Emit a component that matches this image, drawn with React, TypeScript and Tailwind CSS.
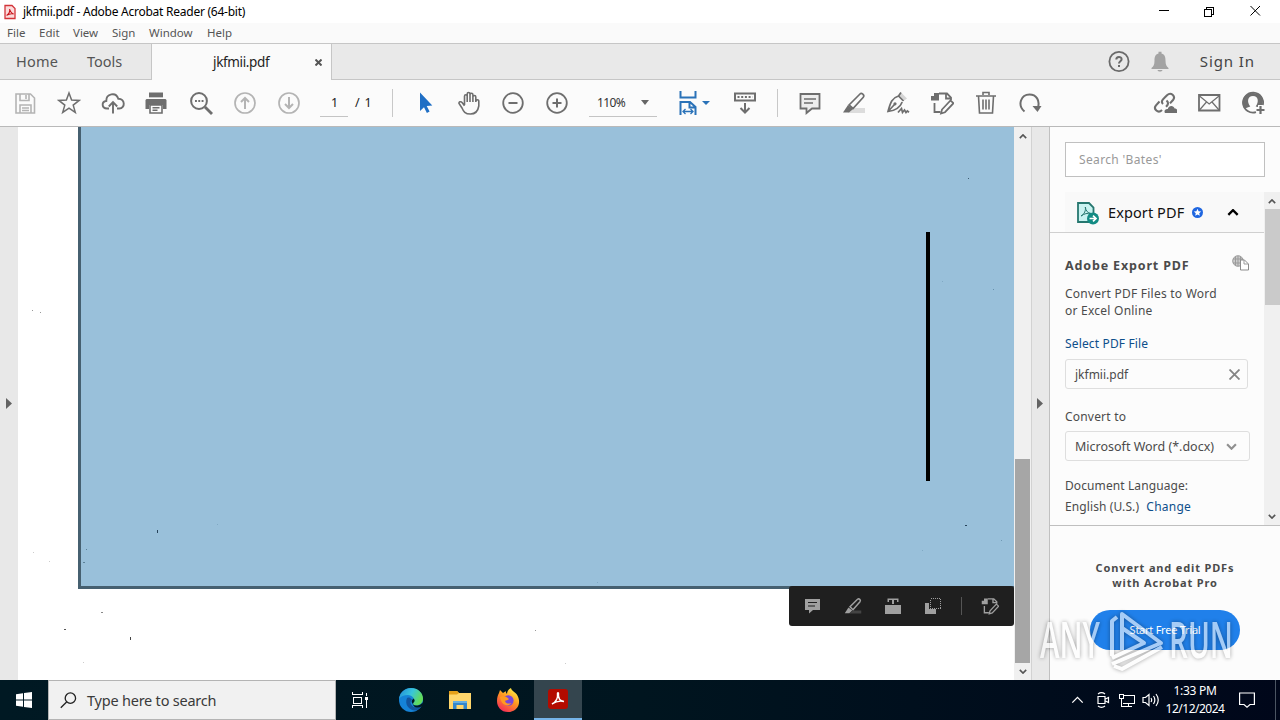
import type { ReactNode } from "react";
import clsx from "clsx";

function Icon({ children, className = "h-6 w-6 text-[#6e6e6e]", box = "0 0 24 24" }: {
  children: ReactNode;
  className?: string;
  box?: string;
}) {
  return (
    <svg
      viewBox={box}
      className={clsx("shrink-0", className)}
      fill="none"
      stroke="currentColor"
      strokeWidth="2"
    >
      {children}
    </svg>
  );
}

function Slot({ children }: { children: ReactNode }) {
  return <div className="flex w-11 shrink-0 items-center justify-center">{children}</div>;
}

function TitleBar() {
  return (
    <header className="flex h-[23px] items-center bg-white">
      <svg viewBox="0 0 12 16" className="ml-1 h-4 w-3 shrink-0" fill="none">
        <path d="M1 1.500h7l3 3v10H1z" fill="#fbdcdc" stroke="#d3343a" strokeWidth="1.300" />
        <path d="M2.600 11.400C5 10 6 7.500 5.700 5c.7 3 2 4.500 4 5-2.600-.6-4.500-.2-7.100 1.400z" stroke="#c8151c" strokeWidth="1.100" />
      </svg>
      <span className="ml-[7px] text-[12px] tracking-[-0.25px] text-black">
        jkfmii.pdf - Adobe Acrobat Reader (64-bit)
      </span>
      <svg viewBox="0 0 110 14" className="mr-[17px] ml-auto h-[14px] w-[110px]" fill="none" stroke="#000" shapeRendering="crispEdges">
        <path d="M6 5.500h10" />
        <path d="M51.500 4.500h7v7h-7zM53.500 4V2.500h7v7H59" />
        <path d="M97.500 1l9.500 9.500M107 1l-9.500 9.500" shapeRendering="auto" />
      </svg>
    </header>
  );
}

const MENUS = [
  { label: "File", width: "w-8" },
  { label: "Edit", width: "w-[34px]" },
  { label: "View", width: "w-[39px]" },
  { label: "Sign", width: "w-[37px]" },
  { label: "Window", width: "w-[58px]" },
  { label: "Help", width: "w-10" },
];

function MenuBar() {
  return (
    <nav className="flex h-5 items-center bg-[#fafafa] pl-[7px] text-[11.5px] text-[#555]">
      {MENUS.map((m) => (
        <span key={m.label} className={m.width}>{m.label}</span>
      ))}
    </nav>
  );
}

function TabBar() {
  return (
    <div className="flex h-[37px] border-y border-[#c6c6c6] bg-[#e9e9e9] text-[14.5px] text-[#555]">
      <div className="flex w-[151px] items-center pl-4">
        <span className="w-[71px] tracking-[0.2px]">Home</span>
        <span>Tools</span>
      </div>
      <div className="-mb-px flex w-[181px] items-center border-x border-[#c6c6c6] bg-[#fafafa]">
        <span className="ml-[61px] text-[13.5px] tracking-[-0.35px] text-[#222]">jkfmii.pdf</span>
        <Icon className="mr-[9px] ml-auto h-[7px] w-[7px] text-[#555]" box="0 0 7 7">
          <path d="M.5.500l6 6M6.500.500l-6 6" />
        </Icon>
      </div>
      <div className="ml-auto flex items-center">
        <Icon className="h-[22px] w-[22px] text-[#6a6a6a]" box="0 0 22 22">
          <circle cx="11" cy="10.500" r="9.600" strokeWidth="1.800" />
          <path d="M8.300 8.500C8.300 5.200 13.600 5.200 13.600 8.300c0 2-2.600 2-2.600 4.200M11 13.900v2" />
        </Icon>
        <svg viewBox="0 0 18 22" className="ml-[21px] h-[22px] w-[18px]" fill="#a3a3a3">
          <path d="M7.500 2.500V.700h3v1.800C14 3.500 14.500 6.500 14.500 9.500c0 4 1 6 3 7.500v1H.5v-1c2-1.500 3-3.500 3-7.500 0-3 .5-6 4-7zM6.500 19h5c-.5 2-4.500 2-5 0z" />
        </svg>
        <span className="mr-[25px] ml-[31px] text-[15px] tracking-[0.9px] text-[#444]">Sign In</span>
      </div>
    </div>
  );
}

function EditPdfGlyph() {
  return (
    <>
      <path d="M9 2.500h8l4 4V9M16 3v4.500h5M4.500 12v9h6" strokeWidth="1.800" />
      <path d="M1 5h3V2h5v7.500H1z" fill="currentColor" stroke="none" />
      <path d="M12 18.500L20.500 9.500l3 2.700-8.500 9-4 1.300z" strokeWidth="1.700" />
    </>
  );
}

function Toolbar() {
  return (
    <div className="flex h-[47px] border-b border-[#b9b9b9] bg-[#fbfbfb] pl-[3px] text-[#6e6e6e]">
      <Slot>
        <Icon className="h-6 w-6 text-[#b4b4b4]">
          <path d="M3 3h14.500l4 4v15H3zM7 3v6.500h9V3M13 4v4M7 22v-8h11v8M9 17h7M9 19.500h7" strokeWidth="1.600" />
        </Icon>
      </Slot>
      <Slot>
        <Icon>
          <path d="M12 2l2.600 7.100 7.600.3-6 4.700 2.100 7.300L12 17.200l-6.300 4.200 2.100-7.300-6-4.700 7.600-.3z" strokeWidth="1.500" />
        </Icon>
      </Slot>
      <Slot>
        <Icon>
          <path d="M8 17.500H6C.5 17.500.2 10.500 5.300 10 5 2.500 15 .5 17.300 7.700c7-.2 7.200 9.800 1 9.800H16" strokeWidth="1.900" />
          <path d="M12 22.500V11.500M7.800 15.500L12 11.200l4.200 4.300" strokeWidth="1.900" />
        </Icon>
      </Slot>
      <Slot>
        <Icon className="-ml-[2px] h-6 w-6 text-[#6e6e6e]">
          <path d="M5 1.500h14v5H5zM2.500 8h19l1 1v9H19v-4H5v4H1.500V9z" fill="currentColor" stroke="none" />
          <path d="M6 14h12v8H6zM8.500 16.700h7M8.500 19.300h5" strokeWidth="1.600" />
          <path d="M4 7.200h16" stroke="#fbfbfb" strokeWidth="1" />
        </Icon>
      </Slot>
      <Slot>
        <Icon>
          <circle cx="10" cy="10" r="7.900" />
          <path d="M16 16l7 7" strokeWidth="2.800" />
          <path d="M6 10h8.500" strokeDasharray="1.900 1.400" />
        </Icon>
      </Slot>
      <Slot>
        <Icon className="h-6 w-6 text-[#b4b4b4]">
          <circle cx="12" cy="12" r="10" strokeWidth="1.700" />
          <path d="M12 18V7M8 11l4-4 4 4" />
        </Icon>
      </Slot>
      <Slot>
        <Icon className="h-6 w-6 text-[#b4b4b4]">
          <circle cx="12" cy="12" r="10" strokeWidth="1.700" />
          <path d="M12 6v11M8 13l4 4 4-4" />
        </Icon>
      </Slot>
      <div className="flex w-[81px] items-center pl-[9px] text-[12.5px] text-[#222]">
        <span className="flex h-7 w-7 items-center justify-center border-b border-[#c4c4c4] pt-px pl-px">1</span>
        <span className="ml-[7px] tracking-[0.8px]">/ 1</span>
      </div>
      <div className="mt-[9px] mr-[10px] h-7 w-px bg-[#c8c8c8]" />
      <Slot>
        <svg viewBox="0 0 24 24" className="h-6 w-6" fill="#1f6fc5">
          <path d="M7 1.500v18.500l4-3.800 2.900 5.800 2.700-1.400-2.900-5.600 5.600-.5z" />
        </svg>
      </Slot>
      <Slot>
        <Icon>
          <path
            d="M7.500 14V5.300c0-2 2.700-2 2.700 0V11M10.200 10V3c0-2 2.800-2 2.800 0v8M13 10V3.800c0-2 2.900-2 2.900 0V11M15.900 10V6c0-2 2.900-2 2.900 0v5c0-3 3-3 3-.5V15C21 20 18.500 23 13.500 23c-5.500 0-7-2.500-8.500-6l-3-4.500c-.4-2 2-2.300 3.300-.8l2.200 3"
            strokeWidth="1.600"
          />
        </Icon>
      </Slot>
      <Slot>
        <Icon>
          <circle cx="12" cy="12" r="9.800" strokeWidth="1.800" />
          <path d="M7.500 12h9" />
        </Icon>
      </Slot>
      <Slot>
        <Icon>
          <circle cx="12" cy="12" r="9.800" strokeWidth="1.800" />
          <path d="M7.500 12h9M12 7.500v9" />
        </Icon>
      </Slot>
      <div className="flex w-[88px] items-center pl-[10px]">
        <span className="flex h-7 w-[68px] items-center border-b border-[#c4c4c4] pl-2 text-[12px] tracking-[-0.6px] text-[#333]">
          110%
          <svg viewBox="0 0 8 5" className="mr-2 ml-auto h-[5px] w-2" fill="#666">
            <path d="M0 0h8L4 5z" />
          </svg>
        </span>
      </div>
      <div className="flex w-14 items-center pl-[10px]">
        <Icon className="h-6 w-[22px] text-[#2a72b8]" box="1 0 22 24">
          <path d="M4.500 0v6.500h15V0M4.500 24V11H14l5.500 5v8M13.500 11v5.500h6" />
          <path d="M7.500 20.500h9M9.500 18L7 20.500 9.500 23M14.500 18l2.500 2.500-2.500 2.500" strokeWidth="1.300" />
        </Icon>
        <svg viewBox="0 0 8 4" className="ml-[3px] h-1 w-2" fill="#2a72b8">
          <path d="M0 0h8L4 4z" />
        </svg>
      </div>
      <Slot>
        <Icon>
          <path d="M2 2.500h20v7H2zM12 12v9M7.500 17l4.500 4.500 4.500-4.500" />
          <path d="M4.500 6h15" strokeDasharray="2 1.700" />
        </Icon>
      </Slot>
      <div className="mt-[9px] mr-[10px] ml-[10px] h-7 w-px bg-[#c8c8c8]" />
      <Slot>
        <Icon>
          <path d="M2.500 3h19v14.500H14L8.500 22v-4.500h-6z" fill="#ededed" strokeWidth="1.800" />
          <path d="M6 8h12M6 12h9" strokeWidth="1.500" />
        </Icon>
      </Slot>
      <Slot>
        <Icon>
          <path d="M9 17h14v5H6z" fill="#dcdcdc" stroke="none" />
          <path d="M7 14L18 3c1.500-1.500 5 1 3.300 3.300L11 17.500z" strokeWidth="1.700" />
          <path d="M6 14l5 4-4 3.500H1z" fill="currentColor" stroke="none" />
        </Icon>
      </Slot>
      <Slot>
        <Icon>
          <path d="M12.500 5L15 1.500l6 6L17.500 10z" fill="#d5d5d5" stroke="none" />
          <path d="M15 1.500L12.500 5C6 7 4.500 11 2 20.500c8-1 12-3.500 14.200-9.500M12.500 5l5 5M2 20.500l6.500-7" strokeWidth="1.700" />
          <circle cx="9" cy="12.800" r="1.600" fill="currentColor" stroke="none" />
          <path d="M12 21.500l3.500-4 1 4 2-2.500 1.500 2.500 1.300-1.500 1.700 1.300" strokeWidth="1.700" />
        </Icon>
      </Slot>
      <Slot>
        <Icon><EditPdfGlyph /></Icon>
      </Slot>
      <Slot>
        <Icon>
          <path d="M2 5h20M9 4V1.500h6V4M4.500 5l1 17h13l1-17M9 8.500v10M12 8.500v10M15 8.500v10" strokeWidth="1.600" />
        </Icon>
      </Slot>
      <Slot>
        <Icon>
          <path d="M6.500 20.500C-1 14 3 3.500 11.500 3.500c7 0 10.500 6 8.500 13" />
          <path d="M14.500 15h9l-4 6z" fill="currentColor" stroke="none" />
        </Icon>
      </Slot>
      <div className="ml-auto flex pr-[5px]">
        <Slot>
          <Icon>
            <path d="M10 13c-2-2-1-4 1-5.800l3-3c4-3.700 9 1 6 4.800l-3 3.400M13.500 9.500c2.500 2 1.500 4.500-.5 6.300M9 19c-4 4-9-1-6-4.600l3.500-3.900" strokeWidth="2.100" />
            <path d="M12 22c-1.500-2 .5-4.500 2.800-4 .8-4 6-4 6.800-.5 3 0 3.500 3 2.400 4.500z" fill="currentColor" stroke="none" />
          </Icon>
        </Slot>
        <Slot>
          <Icon>
            <path d="M2 4h20.500v15.500H2z" strokeWidth="1.800" />
            <path d="M2.500 5l9.700 8L22 5M2.500 19l7-8M22 19l-7-8" strokeWidth="1.200" />
          </Icon>
        </Slot>
        <Slot>
          <Icon>
            <path d="M15 21.200A10 10 0 1 1 21.800 14" strokeWidth="1.800" />
            <path d="M12 2C0 2 0 14 4 18c1.500-1.800 3.500-1.700 5.300-2.600-3.500-4-3-10.400 2.700-10.400s6 6.400 2.700 10.400L17 16v-2h4C24 5 18 2 12 2z" fill="currentColor" stroke="none" />
            <path d="M19.500 15v8M15.500 19h8" strokeWidth="2.200" />
          </Icon>
        </Slot>
      </div>
    </div>
  );
}

// dust left on the scanned page
const SPECKS = [
  "left-[14px] top-[183px] bg-[#999]",
  "left-[22px] top-[185px] bg-[#999]",
  "left-[139px] top-[403px] h-[3px] bg-[#26435a]",
  "left-[68px] top-[422px] bg-[#5b8198]",
  "left-[65px] top-[435px] w-[2px] bg-[#5b8198]",
  "left-[83px] top-[485px] w-[2px] bg-[#888]",
  "left-[46px] top-[502px] w-[2px] bg-[#555]",
  "left-[112px] top-[510px] h-[3px] bg-[#444]",
  "left-[65px] top-[535px] bg-[#ccc]",
  "left-[15px] top-[425px] bg-[#ccc]",
  "left-[31px] top-[434px] bg-[#ccc]",
  "left-[517px] top-[503px] bg-[#999]",
  "left-[547px] top-[536px] bg-[#ccc]",
  "left-[950px] top-[51px] bg-[#3b5a70]",
  "left-[975px] top-[162px] bg-[#6590ab]",
  "left-[924px] top-[154px] bg-[#80a9c4]",
  "left-[947px] top-[398px] w-[2px] bg-[#26435a]",
  "left-[983px] top-[413px] bg-[#7099b4]",
  "left-[904px] top-[423px] bg-[#80a9c4]",
  "left-[199px] top-[397px] bg-[#80a9c4]",
  "left-[579px] top-[455px] bg-[#80a9c4]",
];

function FloatingTools() {
  return (
    <div className="absolute right-0 bottom-[54px] flex h-10 w-[225px] items-center rounded-[3px] bg-[#1f1f1f] pl-1 text-[#a0a0a0]">
      <div className="flex w-10 justify-center">
        <svg viewBox="0 0 18 18" className="h-[18px] w-[18px]" fill="currentColor">
          <path d="M1 2h15v11H9l-4 3.500V13H1z" />
          <path d="M4 5.500h9M4 9h7" stroke="#1f1f1f" strokeWidth="1.200" />
        </svg>
      </div>
      <div className="flex w-10 justify-center">
        <Icon className="h-[18px] w-[18px]">
          <path d="M12 18h11v4H7z" fill="#444" stroke="none" />
          <path d="M8 13L18 3c2-1.500 5 1 3.300 3.300L12 17z" />
          <path d="M6 14l5 4-4 3.500H1z" fill="currentColor" stroke="none" />
        </Icon>
      </div>
      <div className="flex w-10 justify-center">
        <svg viewBox="0 0 18 18" className="h-[18px] w-[18px]" fill="currentColor">
          <path d="M1 8h16v9H1zM3.500 1.500h11V5H13V3h-3v4H8V3H5v2H3.500z" />
        </svg>
      </div>
      <div className="flex w-10 justify-center">
        <svg viewBox="0 0 18 18" className="h-[18px] w-[18px]">
          <path d="M1 6h4v6h7v5H1z" fill="currentColor" />
          <path d="M6.500 1.500h10v10h-10z" fill="none" stroke="currentColor" strokeDasharray="1 1" shapeRendering="crispEdges" />
        </svg>
      </div>
      <div className="ml-2 h-[18px] w-px bg-[#555]" />
      <div className="ml-2 flex w-10 justify-center">
        <Icon className="h-[18px] w-[18px]"><EditPdfGlyph /></Icon>
      </div>
    </div>
  );
}

function DocumentView() {
  return (
    <main className="relative w-[996px] overflow-hidden bg-white pl-[60px]">
      <div className="h-[462px] border-b-[3px] border-l-[3px] border-[#466070] bg-[#99c0da] pt-[105px] pl-[845px]">
        <div className="h-[249px] w-1 bg-black" />
      </div>
      {SPECKS.map((s) => (
        <i key={s} className={clsx("absolute min-h-px min-w-px", s)} />
      ))}
      <FloatingTools />
    </main>
  );
}

function Chevron({ up, thin, className }: { up?: boolean; thin?: boolean; className: string }) {
  return (
    <svg viewBox="0 0 10 6" className={className} fill="none" stroke="currentColor" strokeWidth={thin ? 1 : 2}>
      <path d={up ? "M1 5l4-4 4 4" : "M1 1l4 4 4-4"} />
    </svg>
  );
}

function Gutter({ flip }: { flip?: boolean }) {
  return (
    <div className={clsx("flex w-[18px] bg-[#e8e8e8] pt-[271px]", flip ? "border-l border-[#d2d2d2] pl-[5px]" : "pl-[6px]")}>
      <svg viewBox="0 0 6 11" className="h-[11px] w-[6px]" fill="#636363">
        <path d="M0 0l6 5.500L0 11z" />
      </svg>
    </div>
  );
}

function ToolsPanel() {
  return (
    <aside className="flex w-[231px] flex-col border-l border-[#c0c0c0] bg-[#fcfcfc] text-[12px] text-[#4b4b4b]">
      <div className="mt-[15px] ml-[15px] flex h-[35px] w-[200px] shrink-0 items-center border border-[#c0c0c0] bg-white pt-px pl-[13px] tracking-[0.35px] text-[#999]">
        Search 'Bates'
      </div>
      <div className="mt-[15px] flex h-[334px] shrink-0 border-b border-[#bfbfbf]">
        <div className="w-[214px]">
          <div className="ml-[15px] flex h-10 items-center bg-[#f9f9f9] pt-px pl-[11px]">
            <svg viewBox="0 0 24 24" className="h-6 w-6" fill="none">
              <path d="M2 2h11l4.500 4.500V21H2z" fill="#c9f3f1" stroke="#26776f" strokeWidth="1.800" />
              <path d="M5 15c3.500-2 5-5.500 4.300-9 .5 4 2.500 6 5.700 6.500-3.700-.5-6.500 0-10 2.500z" stroke="#26776f" />
              <circle cx="17" cy="17.500" r="6" fill="#128b83" />
              <path d="M13.500 17.500h6M17 14.700l3 2.800-3 2.800" stroke="#fff" strokeWidth="1.700" />
            </svg>
            <span className="ml-2 w-[84px] text-[14.500px] tracking-[0.1px] whitespace-nowrap text-[#111]">Export PDF</span>
            <svg viewBox="0 0 12 12" className="h-[11px] w-[11px]">
              <circle cx="6" cy="6" r="6" fill="#1f66e0" />
              <path d="M6 2l1.200 2.600 2.800.3-2.100 1.900.6 2.800L6 8.200 3.500 9.600l.6-2.800L2 4.900l2.800-.3z" fill="#fff" />
            </svg>
            <Chevron up className="ml-[24px] h-[7px] w-3 text-black" />
          </div>
          <div className="h-px bg-[#d0d0d0]" />
          <div className="pl-[15px]">
            <div className="mt-[22px] flex h-5 items-center pt-[2px]">
              <b className="text-[12.5px] tracking-[0.85px]">Adobe Export PDF</b>
              <svg viewBox="0 0 17 16" className="-mt-[6px] mr-[15px] ml-auto h-4 w-[17px]" fill="none" stroke="#9b9b9b">
                <circle cx="6" cy="6" r="5.300" fill="#ccc" />
                <path d="M1 4h10M1 8h10M6 1v10M3.500 1.500v9M8.500 1.500v9" />
                <path d="M8.500 5h4l4 4v6h-8z" fill="#fff" stroke="#8b8b8b" />
                <path d="M12 5v4h4" />
              </svg>
            </div>
            <p className="mt-[10px] leading-[17px] tracking-[0.24px]">
              Convert PDF Files to Word
              <br />
              or Excel Online
            </p>
            <a className="mt-4 block leading-[18px] tracking-[0.15px] text-[#0d4f8b]">Select PDF File</a>
            <div className="mt-[6px] flex h-[30px] w-[183px] items-center rounded-[3px] border border-[#dedede] pt-px pl-[9px]">
              jkfmii.pdf
              <Icon className="mr-[7px] ml-auto h-[11px] w-[11px] text-[#858585]" box="0 0 11 11">
                <path d="M.5.500l10 10M10.500.500l-10 10" strokeWidth="1.800" />
              </Icon>
            </div>
            <p className="mt-[19px] leading-[18px] tracking-[0.2px]">Convert to</p>
            <div className="mt-[5px] flex h-[30px] w-[185px] items-center rounded-[3px] border border-[#dedede] pl-[9px] text-[12.5px]">
              <span className="pt-[3px]">Microsoft Word (*.docx)</span>
              <Chevron className="mr-[12px] ml-auto h-[7px] w-[11px] text-[#909090]" />
            </div>
            <p className="mt-[14px] leading-[21px] tracking-[0.1px]">
              Document Language:
              <br />
              English (U.S.) <a className="ml-1 tracking-[0.25px] text-[#0d4f8b]">Change</a>
            </p>
          </div>
        </div>
        <div className="flex w-4 flex-col items-center bg-[#f0f0f0] text-[#555]">
          <Chevron up className="mt-[7px] h-[5px] w-2" />
          <div className="mt-[5px] h-24 w-[15px] bg-[#cacaca]" />
          <Chevron className="mt-auto mb-[6px] h-[5px] w-2" />
        </div>
      </div>
      <div className="mt-[34px] text-center text-[11px] leading-[15px] font-bold tracking-[0.85px]">
        Convert and edit PDFs
        <br />
        with Acrobat Pro
      </div>
      <button className="mt-5 ml-10 h-10 w-[150px] shrink-0 rounded-full bg-[#2080ea] text-[11px] tracking-[-0.25px] text-white">
        Start Free Trial
      </button>
    </aside>
  );
}

function Watermark() {
  return (
    <svg viewBox="0 0 200 64" className="absolute top-[610px] left-[1036px] h-16 w-[200px] overflow-visible opacity-60 drop-shadow-[0_0_2px_rgba(0,0,0,0.6)]">
      <g fill="#fff" fontFamily="'Open Sans', sans-serif" fontSize="50" fontWeight="600">
        <text x="4" y="48" textLength="60" lengthAdjust="spacingAndGlyphs">ANY</text>
        <text x="133" y="48" textLength="64" lengthAdjust="spacingAndGlyphs">RUN</text>
      </g>
      <path
        d="M76 46V11l5-4M86 40V4l39 29-49 21M86 18l22 15-32 15M78 56l8 3 40-22"
        fill="none"
        stroke="#fff"
        strokeWidth="4"
        strokeLinejoin="round"
      />
    </svg>
  );
}

function Taskbar() {
  return (
    <footer className="flex h-10 bg-gradient-to-r from-[#001923] via-[#00151f] to-[#00071a] text-white">
      <div className="flex w-12 items-center justify-center">
        <svg viewBox="0 0 16 16" className="h-4 w-4" fill="#fff">
          <path d="M0 2.200l7-1v6.300H0zM8 1l8-1v7.500H8zM0 8.500h7v6.300l-7-1zM8 8.500h8V16l-8-1z" />
        </svg>
      </div>
      <div className="flex w-72 items-center border border-[#b4b4b4] bg-[#f1f1f1] pl-[11px]">
        <svg viewBox="0 0 18 18" className="h-[17px] w-[17px]" fill="none" stroke="#222" strokeWidth="1.400">
          <circle cx="11" cy="6.500" r="5.500" />
          <path d="M7 10.500L.8 16.700" />
        </svg>
        <span className="ml-[10px] pt-[2px] text-[14.5px] tracking-[-0.22px] text-[#3a3a3a]">Type here to search</span>
      </div>
      <div className="flex w-12 items-center justify-center">
        <svg viewBox="0 0 16 16" className="h-4 w-4" fill="none" stroke="#fff" shapeRendering="crispEdges">
          <path d="M.5 0v2.500h10V0M.5 16v-2.500h10V16M1.500 5.500h8v6h-8zM14.500 1v3M14.500 8v8" />
          <path d="M13 5h3v3h-3z" fill="#fff" stroke="none" />
        </svg>
      </div>
      <div className="flex w-[53px] items-center justify-center">
        <svg viewBox="0 0 24 24" className="h-6 w-6">
          <defs>
            <linearGradient id="edge-top" x1="0" y1="0" x2="1" y2=".4">
              <stop offset="0" stopColor="#2189d8" />
              <stop offset=".55" stopColor="#38c5dc" />
              <stop offset="1" stopColor="#63dc58" />
            </linearGradient>
          </defs>
          <circle cx="12" cy="12" r="12" fill="#1583d7" />
          <path d="M0 11C1 4 6 0 12 0c7 0 12 5 12 10.500 0 5-4 7-7 7-2.500 0-4-1-3-2.500C17 11 13 7 9 7 5 7 1.500 8.500 0 11z" fill="url(#edge-top)" />
          <path d="M8 10c-3 7 3 13 9 12.500 2.500-.5 4.500-2.500 5.500-4.500-3 2-8 2-9.500-.5-2-2-2-4 0-6-2-2.500-4-2.500-5-1.500z" fill="#12559e" />
          <path d="M13.500 15.500c-2-2.500.5-4.500 1-5 2 2 1 3-.2 4.500-.8 1.500.5 2.500 2.700 2.500 2 0 5-.5 6.500-3l.5 2-1.500 2c-3 2-8 1.500-9-3z" fill="#001822" />
        </svg>
      </div>
      <div className="flex w-11 items-center justify-center pl-px">
        <svg viewBox="0 0 22 20" className="h-5 w-[22px]">
          <path d="M0 1h8l2 2h12v16H0z" fill="#ffd66b" />
          <path d="M0 1h8l2 2-2 1.500H0z" fill="#e5a019" />
          <path d="M4 11h14v8h-3.500v-4h-7v4H4z" fill="#3387cc" />
          <path d="M4 11h14v2H4z" fill="#65afe1" />
        </svg>
      </div>
      <div className="flex w-[53px] items-center justify-center pl-px">
        <svg viewBox="0 0 24 24" className="h-6 w-6">
          <defs>
            <linearGradient id="fox" x1=".8" y1="0" x2=".2" y2="1">
              <stop offset="0" stopColor="#fff44a" />
              <stop offset=".45" stopColor="#ff9820" />
              <stop offset="1" stopColor="#f5235c" />
            </linearGradient>
          </defs>
          <path d="M1 13c0-4 1-6 2-8l1-3 3 3 3-2c-.5 1 0 2 1 3 0-3 2-5 4-6 0 3 6 4 7.500 10C25 18 19 24 12 24S1 19 1 13z" fill="url(#fox)" />
          <circle cx="12.300" cy="12.500" r="5.300" fill="#7846d9" />
          <path d="M4 9c3-2 6-.5 9 2-1 1.500-3 1-4 2 1 3 4 3 6.500 2C12 20 5 17 4 9z" fill="#ff9a21" />
        </svg>
      </div>
      <div className="flex w-12 items-center justify-center border-b-2 border-[#76b4e8] bg-[#34454e]">
        <svg viewBox="0 0 20 20" className="h-5 w-5" fill="none">
          <rect width="20" height="20" rx="3" fill="#b30b00" />
          <path d="M4 15c4-2 6-6 5.500-10.500-.2-1.200 1.200-1.200 1 0C10 9 12 12 16 12.500c-4-1-8-.2-12 2.500z" stroke="#fff" strokeWidth="1.400" />
        </svg>
      </div>
      <div className="ml-auto flex items-center">
        <Chevron up thin className="h-[8px] w-[13px]" />
        <svg viewBox="0 0 14 16" className="ml-3 h-4 w-[14px]" fill="none" stroke="#fff" strokeWidth="1.200">
          <path d="M2 4.500h7v7H2zM9.500 7l3-1.500v5l-3-1.500M2 2c2-1.500 5-1.500 7 0M2 14c2 1.500 5 1.500 7 0" />
        </svg>
        <svg viewBox="0 0 18 16" className="ml-[8px] h-4 w-[18px]" fill="none" stroke="#fff" shapeRendering="crispEdges">
          <path d="M5 3.500h11.500v8H5M10.500 12v3M6 14.500h8M1.500 2.500h4v4h-4zM3.500 7v7H6" />
        </svg>
        <svg viewBox="0 0 17 16" className="ml-[6px] h-4 w-[17px]" fill="none" stroke="#fff" strokeWidth="1.200">
          <path d="M1 5.500h2.500l3.500-3v11l-3.500-3H1zM9 6c1 1.500 1 2.500 0 4M11.500 4c2 3 2 5 0 8M14 2c3 4 3 8 0 12" />
        </svg>
        <div className="ml-[4px] w-[64px] text-center text-[12px] leading-[18px] tracking-[-0.5px] whitespace-nowrap">
          <span className="tracking-[-0.3px]">1:33 PM</span>
          <br />
          12/12/2024
        </div>
        <svg viewBox="0 0 16 16" className="ml-[12px] h-4 w-4" fill="none" stroke="#fff" strokeWidth="1.200">
          <path d="M.6 1h14.800v11.500H11l-3 2.700-3-2.700H.6z" />
        </svg>
        <div className="mr-1 ml-5 h-10 w-px bg-[#4b5562]" />
      </div>
    </footer>
  );
}

export default function App() {
  return (
    <div className="relative flex h-[720px] w-[1280px] flex-col overflow-hidden bg-white font-['Noto_Sans',sans-serif]">
      <TitleBar />
      <MenuBar />
      <TabBar />
      <Toolbar />
      <div className="flex h-[553px]">
        <Gutter />
        <DocumentView />
        <div className="flex w-[17px] flex-col items-center bg-[#f0f0f0] text-[#555]">
          <Chevron up className="mt-[7px] h-[5px] w-2" />
          <div className="mt-auto h-[204px] w-[15px] bg-[#a6a6a6]" />
          <Chevron className="mt-[6px] mb-[6px] h-[5px] w-2" />
        </div>
        <Gutter flip />
        <ToolsPanel />
      </div>
      <Taskbar />
      <Watermark />
    </div>
  );
}
